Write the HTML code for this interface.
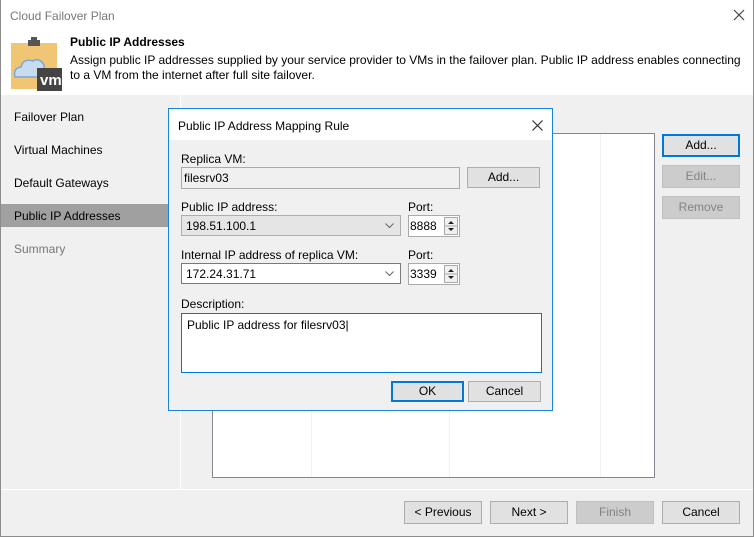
<!DOCTYPE html>
<html><head><style>
*{box-sizing:border-box;margin:0;padding:0}
body{width:754px;height:537px;background:#f0f0f0;font-family:"Liberation Sans",sans-serif;font-size:12px;color:#000;position:relative;overflow:hidden}
.a{position:absolute}
.btn{position:absolute;background:#e1e1e1;border:1px solid #adadad;text-align:center;line-height:20px;font-size:12px}
.dis{background:#cccccc;border-color:#bfbfbf;color:#838383}
.blue{border:2px solid #0078d7;line-height:18px}
.sp{position:absolute;left:275px;width:14px;height:18px;border:1px solid #aaa;background:#f0f0f0}
</style></head><body>
<div class="a" style="left:0;top:0;width:754px;height:537px;border:1px solid #8c8c8c;border-top:none"></div>
<div class="a" style="left:1px;top:0;width:752px;height:95px;background:#fff"></div>
<div class="a" style="left:10px;top:9px;color:#777;font-size:12px">Cloud Failover Plan</div>
<svg class="a" style="left:733px;top:9px" width="12" height="12"><path d="M1 1L11 11M11 1L1 11" stroke="#444" stroke-width="1.2"/></svg>
<svg class="a" style="left:10px;top:37px" width="52" height="54">
<rect x="1" y="6" width="46" height="46" fill="#f0c674"/>
<rect x="18" y="3" width="12" height="6" fill="#555"/><rect x="21" y="0" width="6" height="4" fill="#555"/>
<path d="M5 40 Q3 31 11 30 Q13 21 23 24 Q29 20 34 28 L34 40Z" fill="#c8dcef" stroke="#7aa7d3" stroke-width="1.5"/>
<rect x="27" y="31" width="33" height="23" fill="#444"/>
<text x="30" y="48" fill="#fff" font-family="Liberation Sans" font-size="15" font-weight="bold">vm</text>
</svg>
<div class="a" style="left:70px;top:35px;font-weight:bold">Public IP Addresses</div>
<div class="a" style="left:70px;top:53px;line-height:15px;width:680px">Assign public IP addresses supplied by your service provider to VMs in the failover plan. Public IP address enables connecting to a VM from the internet after full site failover.</div>
<div class="a" style="left:180px;top:95px;width:1px;height:394px;background:#fff"></div>
<div class="a" style="left:14px;top:110px">Failover Plan</div>
<div class="a" style="left:14px;top:143px">Virtual Machines</div>
<div class="a" style="left:14px;top:176px">Default Gateways</div>
<div class="a" style="left:1px;top:204px;width:167px;height:23px;background:#a0a0a0"></div>
<div class="a" style="left:14px;top:209px">Public IP Addresses</div>
<div class="a" style="left:14px;top:242px;color:#777">Summary</div>
<div class="a" style="left:212px;top:133px;width:443px;height:345px;background:#fff;border:1px solid #828790"></div>
<div class="a" style="left:311px;top:134px;width:1px;height:343px;background:#eef2f8"></div>
<div class="a" style="left:449px;top:134px;width:1px;height:343px;background:#eef2f8"></div>
<div class="a" style="left:600px;top:134px;width:1px;height:343px;background:#eef2f8"></div>
<div class="btn blue" style="left:662px;top:134px;width:78px;height:23px">Add...</div>
<div class="btn dis" style="left:662px;top:165px;width:78px;height:23px">Edit...</div>
<div class="btn dis" style="left:662px;top:196px;width:78px;height:23px">Remove</div>
<div class="a" style="left:1px;top:489px;width:752px;height:1px;background:#fff"></div>
<div class="btn" style="left:404px;top:501px;width:78px;height:23px">&lt; Previous</div>
<div class="btn" style="left:490px;top:501px;width:78px;height:23px">Next &gt;</div>
<div class="btn dis" style="left:576px;top:501px;width:78px;height:23px">Finish</div>
<div class="btn" style="left:662px;top:501px;width:78px;height:23px">Cancel</div>
<!-- dialog -->
<div class="a" style="left:168px;top:108px;width:385px;height:303px;background:#f0f0f0;border:1px solid #1883d7">
<div class="a" style="left:0;top:0;width:383px;height:31px;background:#fff"></div>
<div class="a" style="left:9px;top:10px">Public IP Address Mapping Rule</div>
<svg class="a" style="left:363px;top:11px" width="11" height="11"><path d="M0.5 0.5L10.5 10.5M10.5 0.5L0.5 10.5" stroke="#333" stroke-width="1.2"/></svg>
<div class="a" style="left:12px;top:43px">Replica VM:</div>
<div class="a" style="left:12px;top:58px;width:279px;height:22px;border:1px solid #aaa;background:#f0f0f0;padding:3px 2px">filesrv03</div>
<div class="btn" style="left:298px;top:58px;width:73px;height:21px;line-height:19px">Add...</div>
<div class="a" style="left:12px;top:91px">Public IP address:</div>
<div class="a" style="left:12px;top:106px;width:220px;height:21px;border:1px solid #adadad;background:#e5e5e5;padding:3px 4px">198.51.100.1<svg style="position:absolute;right:6px;top:7px" width="9" height="6"><path d="M0.5 0.5L4.5 4.5L8.5 0.5" stroke="#666" fill="none"/></svg></div>
<div class="a" style="left:239px;top:91px">Port:</div>
<div class="a" style="left:239px;top:106px;width:52px;height:22px;border:1px solid #aaa;background:#fff;padding:3px 1px">8888</div>
<div class="sp" style="top:108px"><svg width="12" height="16"><path d="M3 6L6 3L9 6Z M3 10L6 13L9 10Z" fill="#222"/><path d="M0 8H12" stroke="#aaa"/></svg></div>
<div class="a" style="left:12px;top:139px">Internal IP address of replica VM:</div>
<div class="a" style="left:12px;top:154px;width:220px;height:21px;border:1px solid #7a7a7a;background:#fff;padding:3px 4px">172.24.31.71<svg style="position:absolute;right:6px;top:7px" width="9" height="6"><path d="M0.5 0.5L4.5 4.5L8.5 0.5" stroke="#666" fill="none"/></svg></div>
<div class="a" style="left:239px;top:139px">Port:</div>
<div class="a" style="left:239px;top:154px;width:52px;height:22px;border:1px solid #aaa;background:#fff;padding:3px 1px">3339</div>
<div class="sp" style="top:156px"><svg width="12" height="16"><path d="M3 6L6 3L9 6Z M3 10L6 13L9 10Z" fill="#222"/><path d="M0 8H12" stroke="#aaa"/></svg></div>
<div class="a" style="left:12px;top:188px">Description:</div>
<div class="a" style="left:12px;top:204px;width:361px;height:60px;border:1px solid #0078d7;background:#fff;padding:4px 5px">Public IP address for filesrv03|</div>
<div class="btn blue" style="left:222px;top:272px;width:73px;height:21px;line-height:17px">OK</div>
<div class="btn" style="left:299px;top:272px;width:73px;height:21px;line-height:19px">Cancel</div>
</div>
</body></html>
